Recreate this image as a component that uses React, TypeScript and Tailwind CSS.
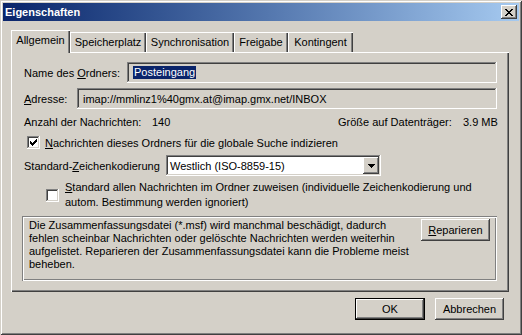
const raised =
  'shadow-[inset_-1px_-1px_#404040,inset_1px_1px_#fff,inset_-2px_-2px_#808080,inset_2px_2px_#d4d0c8]';
const sunken =
  'shadow-[inset_-1px_-1px_#fff,inset_1px_1px_#808080,inset_-2px_-2px_#d4d0c8,inset_2px_2px_#404040]';

const tabs = [
  { label: 'Allgemein', w: 'w-[59px]' },
  { label: 'Speicherplatz', w: 'w-[76px]' },
  { label: 'Synchronisation', w: 'w-[88px]' },
  { label: 'Freigabe', w: 'w-[54px]' },
  { label: 'Kontingent', w: 'w-[65px]' },
];

const CloseGlyph = () => (
  <svg width="8" height="7" viewBox="0 0 8 7" shapeRendering="crispEdges">
    <path
      d="M0 0h2v1H0zM6 0h2v1H6zM1 1h2v1H1zM5 1h2v1H5zM2 2h4v1H2zM3 3h2v1H3zM2 4h4v1H2zM1 5h2v1H1zM5 5h2v1H5zM0 6h2v1H0zM6 6h2v1H6z"
      fill="#000"
    />
  </svg>
);

const Check = () => (
  <svg width="7" height="7" viewBox="0 0 7 7" shapeRendering="crispEdges">
    <path d="M6 0h1v1H6zM5 1h2v1H5zM0 2h1v1H0zM4 2h3v1H4zM0 3h2v1H0zM3 3h3v1H3zM0 4h5v1H0zM1 5h3v1H1zM2 6h1v1H2z" fill="#000" />
  </svg>
);

const Checkbox = ({ checked }: { checked?: boolean }) => (
  <span className={`flex h-[13px] w-[13px] shrink-0 items-center justify-center bg-white ${sunken}`}>
    {checked && <Check />}
  </span>
);

const Button = ({ children, w, primary }: { children: React.ReactNode; w: string; primary?: boolean }) => (
  <div className={`flex h-[22px] ${w} shrink-0 ${primary ? 'border border-black' : ''}`}>
    <div className={`flex flex-1 items-center justify-center ${raised}`}>{children}</div>
  </div>
);

export default function App() {
  return (
    <div className="h-[335px] w-[522px] overflow-hidden bg-white">
      <div
        className={`flex h-[335px] w-[522px] flex-col bg-[#d4d0c8] p-[3px] text-[11px] leading-[14px] text-black font-['Liberation_Sans',Arial,sans-serif] shadow-[inset_1px_1px_#d4d0c8,inset_-1px_-1px_#404040,inset_2px_2px_#fff,inset_-2px_-2px_#808080]`}
      >
        {/* title bar */}
        <div className="flex h-[18px] shrink-0 items-center justify-between bg-linear-to-r from-[#0a246a] to-[#a6caf0] pl-[2px] pr-[2px]">
          <span className="font-bold text-white">Eigenschaften</span>
          <div className={`flex h-[14px] w-[16px] items-center justify-center bg-[#d4d0c8] ${raised}`}>
            <CloseGlyph />
          </div>
        </div>

        {/* tab strip */}
        <div className="ml-[8px] mt-[9px] flex h-[22px] items-end">
          {tabs.map((t, i) =>
            i === 0 ? (
              <div
                key={t.label}
                className={`relative z-10 -mb-px flex h-[23px] ${t.w} items-start justify-center bg-[#d4d0c8] pt-[3px] shadow-[inset_1px_1px_#fff,inset_-1px_0_#404040,inset_-2px_0_#808080]`}
              >
                {t.label}
              </div>
            ) : (
              <div
                key={t.label}
                className={`flex h-[20px] ${t.w} items-start justify-center pt-[3px] shadow-[inset_1px_1px_#fff,inset_-1px_0_#404040,inset_-2px_0_#808080]`}
              >
                {t.label}
              </div>
            ),
          )}
        </div>

        {/* panel */}
        <div className="ml-[8px] flex h-[240px] w-[498px] flex-col pl-[13px] pt-[10px] shadow-[inset_1px_1px_#fff,inset_-1px_-1px_#404040,inset_-2px_-2px_#808080]">
          <div className="flex h-[21px] items-center">
            <span className="w-[103px] shrink-0">
              Name des <u className="underline-offset-1">O</u>rdners:
            </span>
            <div className={`flex h-[21px] w-[370px] items-center bg-[#d4d0c8] pl-[6px] ${sunken}`}>
              <span className="bg-[#0a246a] px-px leading-[13px] text-white">Posteingang</span>
            </div>
          </div>

          <div className="mt-[5px] flex h-[21px] items-center">
            <span className="w-[53px] shrink-0">
              <u className="underline-offset-1">A</u>dresse:
            </span>
            <div className={`flex h-[21px] w-[420px] items-center bg-[#d4d0c8] pl-[6px] ${sunken}`}>
              imap://mmlinz1%40gmx.at@imap.gmx.net/INBOX
            </div>
          </div>

          <div className="mt-[6px] flex h-[14px] items-center">
            <span className="w-[128px] shrink-0">Anzahl der Nachrichten:</span>
            <span className="w-[186px] shrink-0">140</span>
            <span className="w-[125px] shrink-0">Größe auf Datenträger:</span>
            <span>3.9 MB</span>
          </div>

          <div className="mt-[7px] flex h-[13px] items-center pl-[3px]">
            <Checkbox checked />
            <span className="ml-[5px]">
              <u className="underline-offset-1">N</u>achrichten dieses Ordners für die globale Suche indizieren
            </span>
          </div>

          <div className="mt-[6px] flex h-[21px] items-center">
            <span className="w-[142px] shrink-0">
              Standard-<u className="underline-offset-1">Z</u>eichenkodierung
            </span>
            <div className={`flex h-[21px] w-[215px] items-center bg-white pl-[4px] pr-[2px] ${sunken}`}>
              <span className="flex-1">Westlich (ISO-8859-15)</span>
              <div className={`flex h-[17px] w-[16px] items-center justify-center bg-[#d4d0c8] ${raised}`}>
                <svg width="7" height="4" viewBox="0 0 7 4" shapeRendering="crispEdges">
                  <path d="M0 0h7v1H0zM1 1h5v1H1zM2 2h3v1H2zM3 3h1v1H3z" fill="#000" />
                </svg>
              </div>
            </div>
          </div>

          <div className="mt-[4px] flex items-center pl-[22px] leading-[15px]">
            <Checkbox />
            <div className="ml-[6px] flex flex-col">
              <span>
                <u className="underline-offset-1">S</u>tandard allen Nachrichten im Ordner zuweisen (individuelle
                Zeichenkodierung und
              </span>
              <span>autom. Bestimmung werden ignoriert)</span>
            </div>
          </div>

          <div className="-ml-[2px] mt-[6px] flex h-[65px] w-[475px] items-start pl-[7px] pr-[7px] pt-[3px] shadow-[inset_1px_1px_#808080,inset_2px_2px_#fff,inset_-1px_-1px_#fff,inset_-2px_-2px_#808080]">
            <div className="flex flex-1 flex-col leading-[13px]">
              <span>Die Zusammenfassungsdatei (*.msf) wird manchmal beschädigt, dadurch</span>
              <span>fehlen scheinbar Nachrichten oder gelöschte Nachrichten werden weiterhin</span>
              <span>aufgelistet. Reparieren der Zusammenfassungsdatei kann die Probleme meist</span>
              <span>beheben.</span>
            </div>
            <Button w="w-[69px]">
              <span>
                <u className="underline-offset-1">R</u>eparieren
              </span>
            </Button>
          </div>
        </div>

        {/* buttons */}
        <div className="mt-[6px] flex justify-end gap-[10px] pr-[15px]">
          <Button w="w-[70px]" primary>
            OK
          </Button>
          <Button w="w-[69px]">Abbrechen</Button>
        </div>
      </div>
    </div>
  );
}
